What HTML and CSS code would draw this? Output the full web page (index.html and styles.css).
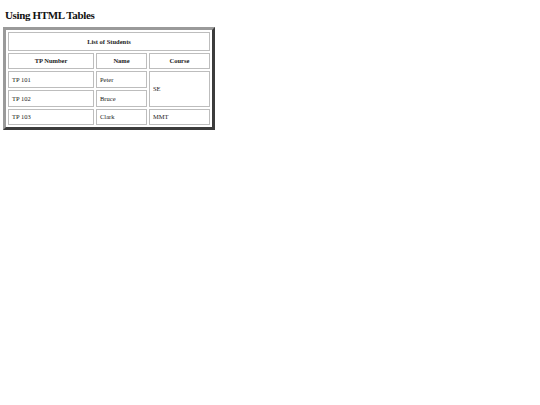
FILE: index.html
```html
<!DOCTYPE html>
<html>
<head>
<meta charset="utf-8">
<link rel="stylesheet" href="styles.css">
</head>
<body>
<h2 class="title">Using HTML Tables</h2>
<table class="students">
  <colgroup><col class="c1"><col class="c2"><col class="c3"></colgroup>
  <tr class="r-cap"><th colspan="3">List of Students</th></tr>
  <tr class="r-head"><th>TP Number</th><th>Name</th><th>Course</th></tr>
  <tr class="r-row"><td>TP 101</td><td>Peter</td><td rowspan="2">SE</td></tr>
  <tr class="r-row"><td>TP 102</td><td>Bruce</td></tr>
  <tr class="r-last"><td>TP 103</td><td>Clark</td><td>MMT</td></tr>
</table>
</body>
</html>
```

FILE: styles.css
```css
html, body {
  margin: 0;
  background: #fff;
}
body {
  padding: 4px 3px;
  font-family: "Liberation Serif", "Times New Roman", serif;
  color: #111;
}
.title {
  font-size: 11px;
  letter-spacing: -0.35px;
  font-weight: bold;
  line-height: 14px;
  margin: 4px 0 5px 2px;
}
.students {
  border-collapse: separate;
  border-spacing: 2px;
  border-style: solid;
  border-width: 3px;
  border-color: #9a9a9a #3c3c3c #3c3c3c #9a9a9a;
  font-size: 6.5px;
  table-layout: fixed;
  width: 212px;
}
.students th, .students td {
  border: 1px solid #bdbdbd;
  padding: 0 3px 1px;
  box-sizing: border-box;
  color: #222;
}
.students th {
  text-align: center;
  font-weight: bold;
}
.students td {
  text-align: left;
  font-weight: normal;
}
.r-cap th { height: 19px; }
.r-head th { height: 16px; }
.r-row td { height: 17px; }
.r-last td { height: 16px; }
.c1 { width: 86px; }
.c2 { width: 51px; }
.c3 { width: 61px; }
```
